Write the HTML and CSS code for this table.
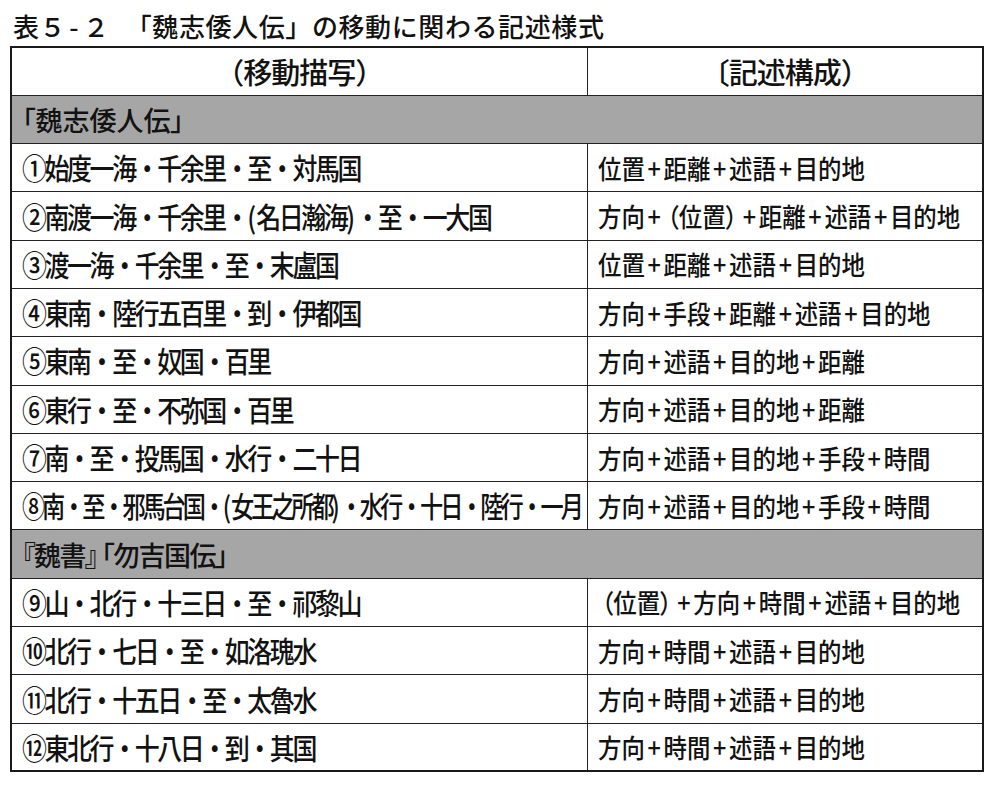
FILE: index.html
```html
<!DOCTYPE html>
<html lang="ja">
<head>
<meta charset="utf-8">
<title>表5-2</title>
<link rel="stylesheet" href="styles.css">
</head>
<body>
<h1 class="title"><span class="title-num">表５<span class="dash">-</span>２</span>「魏志倭人伝」の移動に関わる記述様式</h1>
<table class="styles">
  <colgroup><col class="col-move"><col class="col-form"></colgroup>
  <thead>
    <tr><th><span class="c">（移動描写）</span></th><th><span class="c">〔記述構成）</span></th></tr>
  </thead>
  <tbody>
    <tr class="group"><td colspan="2"><span class="c">「魏志倭人伝」</span></td></tr>
    <tr><td><span class="c">①始度一海・千余里・至・対馬国</span></td><td><span class="c">位置<span class="op">+</span>距離<span class="op">+</span>述語<span class="op">+</span>目的地</span></td></tr>
    <tr><td><span class="c">②南渡一海・千余里・<span class="p">(</span>名日瀚海<span class="p">)</span>・至・一大国</span></td><td><span class="c">方向<span class="op">+</span><span class="lp">（</span>位置<span class="rp">）</span><span class="op">+</span>距離<span class="op">+</span>述語<span class="op">+</span>目的地</span></td></tr>
    <tr><td><span class="c">③渡一海・千余里・至・末盧国</span></td><td><span class="c">位置<span class="op">+</span>距離<span class="op">+</span>述語<span class="op">+</span>目的地</span></td></tr>
    <tr><td><span class="c">④東南・陸行五百里・到・伊都国</span></td><td><span class="c">方向<span class="op">+</span>手段<span class="op">+</span>距離<span class="op">+</span>述語<span class="op">+</span>目的地</span></td></tr>
    <tr><td><span class="c">⑤東南・至・奴国・百里</span></td><td><span class="c">方向<span class="op">+</span>述語<span class="op">+</span>目的地<span class="op">+</span>距離</span></td></tr>
    <tr><td><span class="c">⑥東行・至・不弥国・百里</span></td><td><span class="c">方向<span class="op">+</span>述語<span class="op">+</span>目的地<span class="op">+</span>距離</span></td></tr>
    <tr><td><span class="c">⑦南・至・投馬国・水行・二十日</span></td><td><span class="c">方向<span class="op">+</span>述語<span class="op">+</span>目的地<span class="op">+</span>手段<span class="op">+</span>時間</span></td></tr>
    <tr><td class="tight"><span class="c">⑧南・至・邪馬台国・<span class="p">(</span>女王之所都<span class="p">)</span>・水行・十日・陸行・一月</span></td><td><span class="c">方向<span class="op">+</span>述語<span class="op">+</span>目的地<span class="op">+</span>手段<span class="op">+</span>時間</span></td></tr>
    <tr class="group group-b"><td colspan="2"><span class="c">『魏書』<span class="gap"></span>「勿吉国伝」</span></td></tr>
    <tr><td><span class="c">⑨山・北行・十三日・至・祁黎山</span></td><td><span class="c"><span class="lp">（</span>位置<span class="rp">）</span><span class="op">+</span>方向<span class="op">+</span>時間<span class="op">+</span>述語<span class="op">+</span>目的地</span></td></tr>
    <tr><td><span class="c">⑩北行・七日・至・如洛瑰水</span></td><td><span class="c">方向<span class="op">+</span>時間<span class="op">+</span>述語<span class="op">+</span>目的地</span></td></tr>
    <tr><td><span class="c">⑪北行・十五日・至・太魯水</span></td><td><span class="c">方向<span class="op">+</span>時間<span class="op">+</span>述語<span class="op">+</span>目的地</span></td></tr>
    <tr><td><span class="c">⑫東北行・十八日・到・其国</span></td><td><span class="c">方向<span class="op">+</span>時間<span class="op">+</span>述語<span class="op">+</span>目的地</span></td></tr>
  </tbody>
</table>
</body>
</html>
```
FILE: styles.css
```css
html, body {
  margin: 0;
  padding: 0;
  background: #ffffff;
}

body {
  color: #121212;
  font-family: "Noto Sans CJK JP", "Noto Sans", sans-serif;
  font-weight: 500;
}

.title {
  margin: 0;
  height: 46px;
  padding: 0 0 0 13px;
  box-sizing: border-box;
  font-size: 26px;
  font-weight: 500;
  line-height: 52px;
  white-space: nowrap;
  letter-spacing: 0.6px;
}

.title-num {
  margin-right: 16px;
}

.title .dash {
  margin: 0 4px 0 3px;
}

.styles {
  margin-left: 10px;
  width: 974px;
  table-layout: fixed;
  border-collapse: collapse;
  border: 2px solid #1a1a1a;
}

.col-move {
  width: 576px;
}

.styles th,
.styles td {
  height: 48.3px;
  box-sizing: border-box;
  padding: 0 0 0 10px;
  border: 1.5px solid #222222;
  font-weight: 500;
  line-height: 1;
  text-align: left;
  vertical-align: middle;
  white-space: nowrap;
  overflow: hidden;
}

.c {
  display: inline-block;
  white-space: nowrap;
  transform-origin: 0 50%;
}

/* left column: condensed gothic */
.styles tbody td:first-child .c {
  font-size: 29px;
  letter-spacing: -2.8px;
  transform: scaleX(0.86);
}

/* right column */
.styles tbody td:last-child .c {
  font-size: 26px;
  letter-spacing: 0;
  transform: scaleX(0.9);
}

.styles th {
  text-align: center;
  padding: 0;
}

.styles th .c {
  font-size: 29px;
  letter-spacing: -1px;
}

.styles .group td {
  background: #a6a6a6;
  padding-left: 10px;
}

.styles tbody .group td .c {
  font-size: 27px;
  letter-spacing: 0;
  transform: none;
  font-feature-settings: "palt";
}

.styles tbody .group-b td .c {
  letter-spacing: -1.5px;
}

.gap {
  display: inline-block;
  width: 4px;
}

.styles tbody td.tight .c {
  letter-spacing: -3.9px;
  transform: scaleX(0.8);
}

.p {
  letter-spacing: 0;
}

.op {
  margin: 0 3px;
}

.lp {
  font-feature-settings: "palt";
  margin-left: 4px;
}

.rp {
  font-feature-settings: "palt";
  margin-right: 3px;
}
```
